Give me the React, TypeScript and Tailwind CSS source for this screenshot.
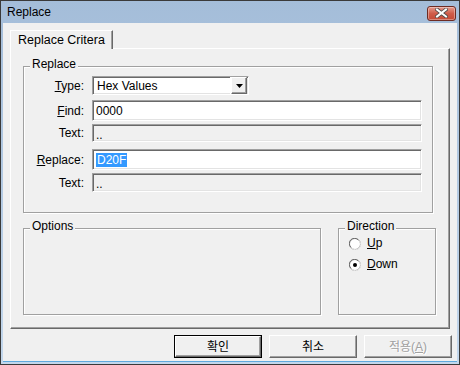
import React from 'react';

// Classic Win32 "Replace" dialog
const sunken =
  'border border-t-[#a0a0a0] border-l-[#a0a0a0] border-r-white border-b-white shadow-[inset_1px_1px_0_#696969,inset_-1px_-1px_0_#e3e3e3]';
const raised =
  'border border-t-white border-l-white border-r-[#696969] border-b-[#696969] shadow-[inset_-1px_-1px_0_#a0a0a0]';

function GroupBox({ label, className = '', children }: { label: string; className?: string; children?: React.ReactNode }) {
  return (
    <div className={`relative border border-[#a0a0a0] shadow-[inset_1px_1px_0_#fff,1px_1px_0_#fff] ${className}`}>
      <span className="absolute -top-[11px] left-[6px] bg-[#f0f0f0] px-[2px] leading-[16px]">{label}</span>
      {children}
    </div>
  );
}

function FieldRow({
  label,
  height,
  width = 'w-[330px]',
  className = '',
  disabled = false,
  children,
}: {
  label: React.ReactNode;
  height: string;
  width?: string;
  className?: string;
  disabled?: boolean;
  children?: React.ReactNode;
}) {
  return (
    <div className={`flex items-center ${className}`}>
      <div className="w-[60px] text-right leading-[14px]">{label}</div>
      <div
        className={`ml-[8px] ${width} ${height} ${sunken} ${disabled ? 'bg-[#f0f0f0]' : 'bg-white'} flex items-center pl-[3px]`}
      >
        {children}
      </div>
    </div>
  );
}

function Radio({ checked }: { checked?: boolean }) {
  return (
    <svg width="12" height="12" viewBox="0 0 12 12">
      <circle cx="6" cy="6" r="5.5" fill="#fff" stroke="#a0a0a0" />
      <path d="M1.8 9.2A4.6 4.6 0 0 1 9.2 1.8" fill="none" stroke="#696969" />
      <path d="M10.2 2.8A4.6 4.6 0 0 1 2.8 10.2" fill="none" stroke="#e3e3e3" />
      {checked && <circle cx="6" cy="6" r="2" fill="#000" />}
    </svg>
  );
}

function Button({ children, isDefault, disabled }: { children: React.ReactNode; isDefault?: boolean; disabled?: boolean }) {
  return (
    <div className={`w-[88px] h-[23px] ${isDefault ? 'border border-black' : ''}`}>
      <div
        className={`h-full ${raised} flex items-center justify-center ${
          disabled ? 'text-[#a0a0a0] [text-shadow:1px_1px_0_#fff]' : 'text-black'
        }`}
      >
        {children}
      </div>
    </div>
  );
}

export default function App() {
  return (
    <div
      className={`w-[460px] h-[365px] flex flex-col border border-[#3a3a3a] bg-gradient-to-b from-[#a4bdd9] to-[#c3d7ec] text-[12px] text-black ${"font-['Liberation_Sans','Noto_Sans_CJK_KR',sans-serif]"}`}
    >
      {/* title bar */}
      <div className="h-[22px] flex items-center pl-[6px] pr-[3px]">
        <span className="leading-[14px]">Replace</span>
        <div className="ml-auto mt-[2px] w-[29px] h-[15px] rounded-[3px] border border-[#6e2b22] bg-gradient-to-b from-[#e59a8c] via-[#cf5c4a] to-[#c44a36] flex items-center justify-center shadow-[inset_0_0_0_1px_rgba(255,255,255,0.35)]">
          <svg width="13" height="10" viewBox="0 0 13 10">
            <path d="M2 1.5L11 8.5M11 1.5L2 8.5" stroke="#4a4a4a" strokeWidth="3.6" strokeLinecap="square" />
            <path d="M2 1.5L11 8.5M11 1.5L2 8.5" stroke="#fff" strokeWidth="2" strokeLinecap="square" />
          </svg>
        </div>
      </div>

      {/* client area */}
      <div className="flex-1 mx-[2px] mb-[2px] bg-[#f0f0f0] flex flex-col pl-[7px] pr-[5px] pt-[7px] border-b border-[#5fa9dd]">
        {/* tab header */}
        <div className="flex">
          <div className="relative z-10 -mb-px w-[103px] h-[19px] border border-b-0 border-t-white border-l-white border-r-[#696969] shadow-[inset_-1px_0_0_#a0a0a0] bg-[#f0f0f0] pl-[7px] pt-[1px] leading-[16px] text-[12.5px]">
            Replace Critera
          </div>
        </div>

        {/* tab panel */}
        <div className={`w-[440px] h-[281px] ${raised} pl-[12px] pt-[17px] flex flex-col`}>
          <GroupBox label="Replace" className="w-[410px] h-[147px]">
            <FieldRow
              label={
                <>
                  <u>T</u>ype:
                </>
              }
              height="h-[19px]"
              width="w-[157px]"
              className="mt-[9px]"
            >
              <span className="flex-1 leading-[14px] pl-[1px]">Hex Values</span>
              <div className="w-[17px] h-full border-l border-white flex items-stretch">
                <div className={`flex-1 ${raised} flex items-center justify-center bg-[#f0f0f0]`}>
                  <svg width="7" height="4" viewBox="0 0 7 4">
                    <path d="M0 0H7L3.5 4Z" fill="#000" />
                  </svg>
                </div>
              </div>
              <div className="w-[1px]" />
            </FieldRow>
            <FieldRow
              label={
                <>
                  <u>F</u>ind:
                </>
              }
              height="h-[21px]"
              className="mt-[5px]"
            >
              <span className="leading-[14px]">0000</span>
            </FieldRow>
            <FieldRow label="Text:" height="h-[18px]" className="mt-[3px]" disabled>
              <span className="leading-[10px] pt-[3px]">..</span>
            </FieldRow>
            <FieldRow
              label={
                <>
                  <u>R</u>eplace:
                </>
              }
              height="h-[21px]"
              className="mt-[7px]"
            >
              <span className="leading-[14px] bg-[#3399ff] text-white px-[1px]">D20F</span>
            </FieldRow>
            <FieldRow label="Text:" height="h-[19px]" className="mt-[3px]" disabled>
              <span className="leading-[10px] pt-[3px]">..</span>
            </FieldRow>
          </GroupBox>

          <div className="flex mt-[15px]">
            <GroupBox label="Options" className="w-[298px] h-[87px]" />
            <GroupBox label="Direction" className="ml-[17px] w-[98px] h-[87px]">
              <div className="flex flex-col pl-[10px] pt-[8px] gap-[8px]">
                <div className="flex items-center gap-[6px] leading-[13px]">
                  <Radio />
                  <span>
                    <u>U</u>p
                  </span>
                </div>
                <div className="flex items-center gap-[6px] leading-[13px]">
                  <Radio checked />
                  <span>
                    <u>D</u>own
                  </span>
                </div>
              </div>
            </GroupBox>
          </div>
        </div>

        {/* buttons */}
        <div className="flex justify-end gap-[7px] mt-[6px]">
          <Button isDefault>확인</Button>
          <Button>취소</Button>
          <Button disabled>
            적용(<u>A</u>)
          </Button>
        </div>
      </div>
    </div>
  );
}
